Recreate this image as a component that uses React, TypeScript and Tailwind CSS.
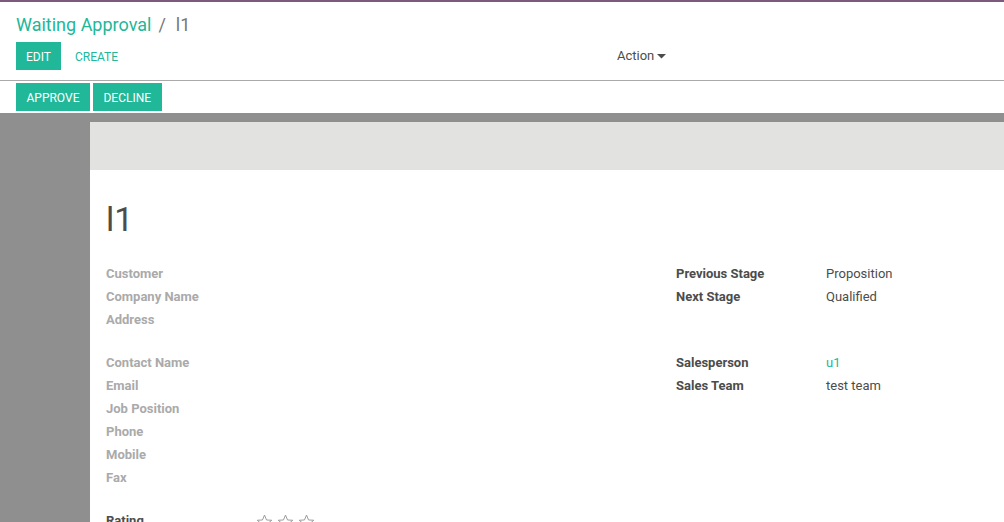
import React from "react";

const teal = "text-[#21b799]";

function StarOutline() {
  return (
    <svg width="17" height="16" viewBox="0 0 24 23" className="shrink-0">
      <polygon
        points="12,1.5 14.9,8.6 22.5,9 16.6,13.9 18.6,21.3 12,17.1 5.4,21.3 7.4,13.9 1.5,9 9.1,8.6"
        fill="none"
        stroke="#9a9a9a"
        strokeWidth="1.4"
        strokeLinejoin="round"
      />
    </svg>
  );
}

type Row = { label: string; value?: string; link?: boolean };

function FieldGroup({ rows, strong }: { rows: Row[]; strong?: boolean }) {
  return (
    <div className="flex flex-col">
      {rows.map((r) => (
        <div key={r.label} className="flex h-[23px] items-center">
          <div
            className={`w-[150px] shrink-0 font-bold ${
              strong ? "text-[#4c4c4c]" : "text-[#aaaaaa]"
            }`}
          >
            {r.label}
          </div>
          {r.value && (
            <div className={r.link ? teal : "text-[#4c4c4c]"}>{r.value}</div>
          )}
        </div>
      ))}
    </div>
  );
}

export default function App() {
  return (
    <div
      className="h-[522px] w-[1004px] overflow-hidden bg-[#8f8f8f] text-[13px]"
      style={{ fontFamily: "Roboto, 'Noto Sans', sans-serif" }}
    >
      {/* control panel */}
      <div className="border-t-2 border-[#7c5a7b] border-b border-b-[#aaaaaa] bg-white px-4 pb-[10px] pt-2">
        <div className="flex h-[28px] items-center pt-px text-[18px] leading-[28px]">
          <span className={teal}>Waiting Approval</span>
          <span className="ml-[7px] text-[#777]">/</span>
          <span className="ml-[10px] text-[#777]">l1</span>
        </div>
        <div className="mt-1 grid grid-cols-2">
          <div className="flex items-center">
            <button className="h-[28px] bg-[#21b799] px-[10px] pt-px text-[12px] text-white">
              EDIT
            </button>
            <button className={`ml-1 h-[28px] px-[10px] pt-px text-[12px] ${teal}`}>
              CREATE
            </button>
          </div>
          <div className="flex items-center pl-[115px]">
            <button className="flex h-[28px] items-center gap-[3px] text-[#4c4c4c]">
              Action
              <svg width="9" height="5" viewBox="0 0 9 5">
                <polygon points="0,0 9,0 4.5,4.5" fill="#4c4c4c" />
              </svg>
            </button>
          </div>
        </div>
      </div>

      {/* statusbar */}
      <div className="flex h-[32px] items-center gap-[3px] bg-white px-4">
        <button className="h-[28px] bg-[#21b799] px-[10.5px] pt-px text-[12px] text-white">
          APPROVE
        </button>
        <button className="h-[28px] bg-[#21b799] px-[10.5px] pt-px text-[12px] text-white">
          DECLINE
        </button>
      </div>

      {/* sheet */}
      <div className="pl-[90px] pt-[9px]">
        <div className="bg-white">
          <div className="h-[48px] bg-[#e2e2e0]" />
          <div className="px-4 pt-[29px]">
            <h1 className="text-[34px] leading-[40px] text-[#4c4c4c]">l1</h1>
            <div className="mt-[23px] flex flex-col gap-[20px]">
              <div className="grid grid-cols-[570px_1fr]">
                <FieldGroup
                  rows={[
                    { label: "Customer" },
                    { label: "Company Name" },
                    { label: "Address" },
                  ]}
                />
                <FieldGroup
                  strong
                  rows={[
                    { label: "Previous Stage", value: "Proposition" },
                    { label: "Next Stage", value: "Qualified" },
                  ]}
                />
              </div>
              <div className="grid grid-cols-[570px_1fr]">
                <FieldGroup
                  rows={[
                    { label: "Contact Name" },
                    { label: "Email" },
                    { label: "Job Position" },
                    { label: "Phone" },
                    { label: "Mobile" },
                    { label: "Fax" },
                  ]}
                />
                <FieldGroup
                  strong
                  rows={[
                    { label: "Salesperson", value: "u1", link: true },
                    { label: "Sales Team", value: "test team" },
                  ]}
                />
              </div>
              <div className="flex h-[23px] items-center">
                <div className="w-[150px] shrink-0 font-bold text-[#4c4c4c]">
                  Rating
                </div>
                <div className="flex gap-[4px] pt-[2px]">
                  <StarOutline />
                  <StarOutline />
                  <StarOutline />
                </div>
              </div>
            </div>
          </div>
          <div className="h-[40px]" />
        </div>
      </div>
    </div>
  );
}
